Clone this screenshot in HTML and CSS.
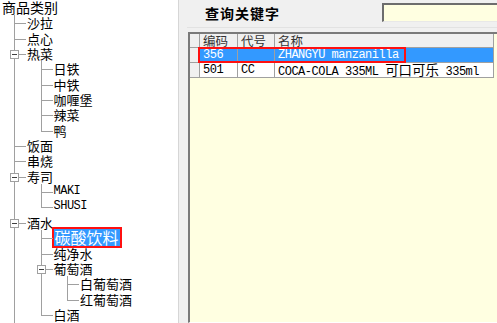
FILE: index.html
```html
<!DOCTYPE html>
<html lang="zh">
<head>
    <meta charset="UTF-8">
    <title>商品类别</title>
    <link rel="stylesheet" href="styles.css">
</head>
<body>
<div class="app">

    <div class="tree">
        <div class="root-label">商品类别</div>
        <ul class="branch top">
            <li><span class="label">沙拉</span></li>
            <li><span class="label">点心</span></li>
            <li><span class="toggle"></span><span class="label">热菜</span>
                <ul class="branch">
                    <li><span class="label">日铁</span></li>
                    <li><span class="label">中铁</span></li>
                    <li><span class="label">咖喱堡</span></li>
                    <li><span class="label">辣菜</span></li>
                    <li><span class="label">鸭</span></li>
                </ul>
            </li>
            <li><span class="label">饭面</span></li>
            <li><span class="label">串烧</span></li>
            <li><span class="toggle"></span><span class="label">寿司</span>
                <ul class="branch">
                    <li><span class="label en">MAKI</span></li>
                    <li><span class="label en">SHUSI</span></li>
                </ul>
            </li>
            <li><span class="toggle"></span><span class="label">酒水</span>
                <ul class="branch">
                    <li><span class="label"><span class="selected">碳酸饮料</span></span></li>
                    <li><span class="label">纯净水</span></li>
                    <li><span class="toggle"></span><span class="label">葡萄酒</span>
                        <ul class="branch">
                            <li><span class="label">白葡萄酒</span></li>
                            <li><span class="label">红葡萄酒</span></li>
                        </ul>
                    </li>
                    <li><span class="label">白酒</span></li>
                </ul>
            </li>
            <li><span class="label">其它</span></li>
        </ul>
    </div>

    <div class="splitter"></div>

    <div class="main">
        <div class="search">
            <span class="search-title">查询关键字</span>
            <div class="keyword"></div>
        </div>

        <div class="grid">
            <div class="grid-row head">
                <div class="cell mark"></div>
                <div class="cell">编码</div>
                <div class="cell">代号</div>
                <div class="cell">名称</div>
            </div>
            <div class="grid-row current">
                <div class="cell mark"></div>
                <div class="cell">356</div>
                <div class="cell"></div>
                <div class="cell">ZHANGYU manzanilla</div>
                <span class="highlight"></span>
            </div>
            <div class="grid-row">
                <div class="cell mark"></div>
                <div class="cell">501</div>
                <div class="cell">CC</div>
                <div class="cell">COCA-COLA 335ML <span class="cn">可口可乐</span> 335ml</div>
            </div>
        </div>
    </div>

</div>
</body>
</html>
```

FILE: styles.css
```css
* {
    margin: 0;
    padding: 0;
    box-sizing: border-box;
}

body {
    font-family: "Liberation Mono", "Noto Sans CJK SC", monospace;
    background-color: #f0f0f0;
    color: #000;
}

.app {
    display: flex;
    height: 323px;
    overflow: hidden;
}


/* category tree */

.tree {
    width: 179px;
    flex-shrink: 0;
    background-color: #fff;
    border-right: 1px solid #d6d6d6;
    padding-left: 2px;
    overflow: hidden;
    font-family: "Noto Sans CJK SC", sans-serif;
    font-size: 13px;
    color: #000;
}

.root-label {
    height: 15.35px;
    line-height: 15.35px;
    font-size: 14px;
}

.branch {
    list-style: none;
    margin-left: 13.5px;
}

.branch.top {
    margin-left: 12px;
}

.branch li {
    position: relative;
    padding-left: 13px;
}

.branch li::before {
    content: '';
    position: absolute;
    left: 0;
    top: 0;
    width: 11px;
    height: 8px;
    border-left: 1px solid #a0a0a0;
    border-bottom: 1px solid #a0a0a0;
}

.branch li:not(:last-child)::after {
    content: '';
    position: absolute;
    left: 0;
    top: 0;
    bottom: 0;
    border-left: 1px solid #a0a0a0;
}

.label {
    display: block;
    height: 15.35px;
    line-height: 15.35px;
    white-space: nowrap;
}

.label.en {
    font-family: "Liberation Mono", monospace;
    font-size: 12px;
    letter-spacing: -0.5px;
}

.toggle {
    position: absolute;
    left: -4px;
    top: 4px;
    width: 9px;
    height: 9px;
    border: 1px solid #a0a0a0;
    background-color: #fff;
    z-index: 1;
}

.toggle::after {
    content: '';
    position: absolute;
    left: 1px;
    right: 1px;
    top: 3px;
    border-top: 1px solid #404040;
}

.selected {
    display: inline-block;
    vertical-align: top;
    margin: -3.3px 0 0 -2px;
    padding: 0 1px;
    height: 21px;
    line-height: 17px;
    font-size: 16px;
    color: #fff;
    background-color: #3399ff;
    border: 2px solid #ff1010;
}

.splitter {
    width: 8px;
    flex-shrink: 0;
    background-color: #f0f0f0;
}


/* right side */

.main {
    flex: 1;
    display: flex;
    flex-direction: column;
}

.search {
    display: flex;
    align-items: flex-start;
    height: 28px;
    padding-left: 18px;
    border-bottom: 1px solid #e2e2e2;
}

.search-title {
    margin-top: 4px;
    font-family: "Noto Sans CJK SC", sans-serif;
    font-size: 14px;
    font-weight: bold;
    letter-spacing: 1px;
    line-height: 18px;
}

.keyword {
    margin-left: auto;
    margin-top: 3px;
    width: 115px;
    height: 19px;
    background-color: #ffffe1;
    border-top: 2px solid #6d6d6d;
    border-left: 2px solid #6d6d6d;
    border-bottom: 1px solid #e8e8e8;
}

.grid {
    flex: 1;
    margin-top: 4px;
    margin-left: 1px;
    background-color: #ffffe1;
    border-top: 2px solid #7a7a7a;
    border-left: 2px solid #7a7a7a;
    border-bottom: 1px solid #fff;
}

.grid-row {
    position: relative;
    display: grid;
    grid-template-columns: 10px 38px 37px 1fr;
    width: calc(100% - 3px);
    height: 15px;
    background-color: #fff;
    border-bottom: 1px solid #a0a0a0;
    border-right: 1px solid #a0a0a0;
    font-size: 12px;
    letter-spacing: -0.5px;
    line-height: 14px;
}

.grid-row.head {
    height: 14px;
    background-color: #f0f0f0;
    font-family: "Noto Sans CJK SC", sans-serif;
    font-size: 12.5px;
    letter-spacing: 0;
    line-height: 13px;
    color: #333;
}

.grid-row.current {
    background-color: #3399ff;
    color: #fff;
}

.cell {
    padding-left: 3px;
    border-right: 1px solid #a0a0a0;
    white-space: nowrap;
    overflow: hidden;
}

.cell:last-of-type {
    border-right: none;
}

.cell.mark {
    background-color: #f0f0f0;
    padding: 0;
}

.cn {
    font-family: "Noto Sans CJK SC", sans-serif;
    font-size: 13.4px;
    letter-spacing: 0;
    line-height: 13px;
}

.highlight {
    position: absolute;
    left: 8px;
    top: -1px;
    width: 208px;
    height: 16px;
    border: 2px solid #ff1010;
}
```
